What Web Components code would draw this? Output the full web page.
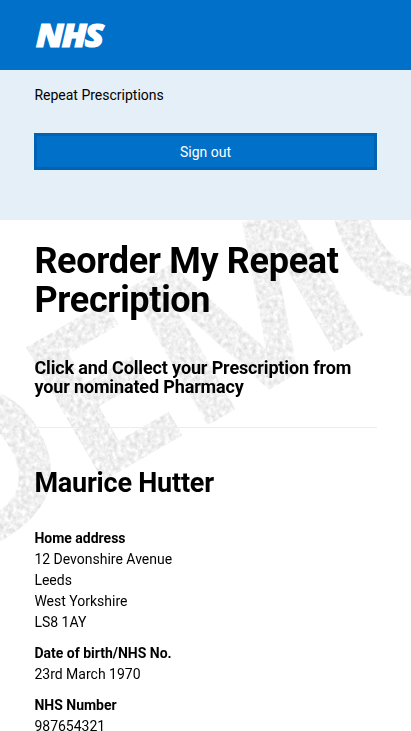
<!DOCTYPE html>
<html lang="en">
<head>
<meta charset="utf-8">
<title>Repeat Prescriptions</title>
<style>
html,body{margin:0;height:731px;overflow:hidden;background:#fff}
body{font-family:Roboto,"Liberation Sans",sans-serif;font-size:14px;line-height:21px;color:#000}
</style>
</head>
<body>
<rx-page></rx-page>
<script>
const define = (name, html) => {
  const t = document.createElement('template');
  t.innerHTML = html;
  customElements.define(name, class extends HTMLElement {
    constructor() {
      super();
      this.attachShadow({mode: 'open'}).append(t.content.cloneNode(true));
    }
  });
};

define('nhs-header', `
<style>:host{display:flex;align-items:flex-start;box-sizing:border-box;height:70px;padding:15px 35px;background:#0070c9}
svg{display:block;overflow:visible}
text{font:italic 800 32px/40px "Open Sans",sans-serif;letter-spacing:-1.8px;fill:#fff;stroke:#fff;stroke-width:1.2}</style>
<svg width="80" height="40" viewBox="0 0 80 40" role="img" aria-label="NHS"><text x="1" y="31.5" textLength="66" lengthAdjust="spacingAndGlyphs">NHS</text></svg>`);

define('action-button', `
<style>:host{display:block}
button{display:block;box-sizing:border-box;width:100%;height:37px;padding:1px 0 0;border:3px solid #0062b3;background:#0070c9;color:#fff;font:inherit;line-height:31px}</style>
<button><slot></slot></button>`);

define('service-bar', `
<style>:host{display:flex;flex-direction:column;gap:27px;box-sizing:border-box;height:150px;padding:15px 34px;background:#e5eff8}
span{display:block;padding-left:.4px}</style>
<span><slot></slot></span><action-button>Sign out</action-button>`);

define('demo-watermark', `
<style>:host{display:block;position:absolute;inset:0;z-index:0;pointer-events:none}
svg{display:block}
text{font:700 216px "Open Sans",sans-serif;fill:#eee}</style>
<svg width="411" height="511" viewBox="0 220 411 511" aria-hidden="true">
<defs><filter id="g" filterUnits="userSpaceOnUse" x="-10" y="210" width="431" height="400" color-interpolation-filters="sRGB">
<feTurbulence type="fractalNoise" baseFrequency=".23 .21" numOctaves="3" seed="8" result="n"/>
<feColorMatrix in="n" type="matrix" values=".18 .12 0 0 .79  .18 .12 0 0 .79  .18 .12 0 0 .79  0 0 0 0 1" result="c"/>
<feComposite in="c" in2="SourceGraphic" operator="in"/></filter></defs>
<g filter="url(#g)"><g transform="translate(103 481) rotate(-30)">
<text x="-177.5" y="1">D</text>
<text transform="translate(-20 0) scale(1.03 1)">E</text>
<text transform="translate(97.5 3.5) scale(1.09 1.02)">M</text>
<text x="313.6" y="1">O</text></g></g>
</svg>`);

define('page-heading', `
<style>:host{display:block}
h1,h2{margin:0;font-weight:700}
h1{font-size:36px;line-height:39px;letter-spacing:-.33px}
h2{font-size:18px;line-height:19px;margin-top:38px;letter-spacing:-.14px}</style>
<h1><slot name="title"></slot></h1><h2><slot></slot></h2>`);

define('detail-group', `
<style>:host{display:block}b{display:block;font-weight:700}div{display:flex;flex-direction:column}</style>
<b><slot name="label"></slot></b><div><slot></slot></div>`);

define('patient-details', `
<style>:host{display:flex;flex-direction:column;gap:10px}
h2{margin:0 0 20px;font-size:27px;line-height:30px;font-weight:700;letter-spacing:-.22px}</style>
<h2>Maurice Hutter</h2>
<detail-group><span slot="label">Home address</span><span>12 Devonshire Avenue</span><span>Leeds</span><span>West Yorkshire</span><span>LS8 1AY</span></detail-group>
<detail-group><span slot="label">Date of birth/NHS No.</span><span>23rd March 1970</span></detail-group>
<detail-group><span slot="label">NHS Number</span><span>987654321</span></detail-group>`);

define('rx-page', `
<style>:host{display:block}
main{position:relative;box-sizing:border-box;height:511px;padding:22px 34px 0;overflow:hidden}
.content{position:relative;z-index:1}
page-heading,patient-details{padding-left:.4px}
hr{height:1px;border:0;margin:31px 0 40px;background:#ececec}</style>
<nhs-header></nhs-header>
<service-bar>Repeat Prescriptions</service-bar>
<main><demo-watermark></demo-watermark><div class="content">
<page-heading><span slot="title">Reorder My Repeat Precription</span>Click and Collect your Prescription from your nominated Pharmacy</page-heading>
<hr><patient-details></patient-details></div></main>`);
</script>
</body>
</html>
